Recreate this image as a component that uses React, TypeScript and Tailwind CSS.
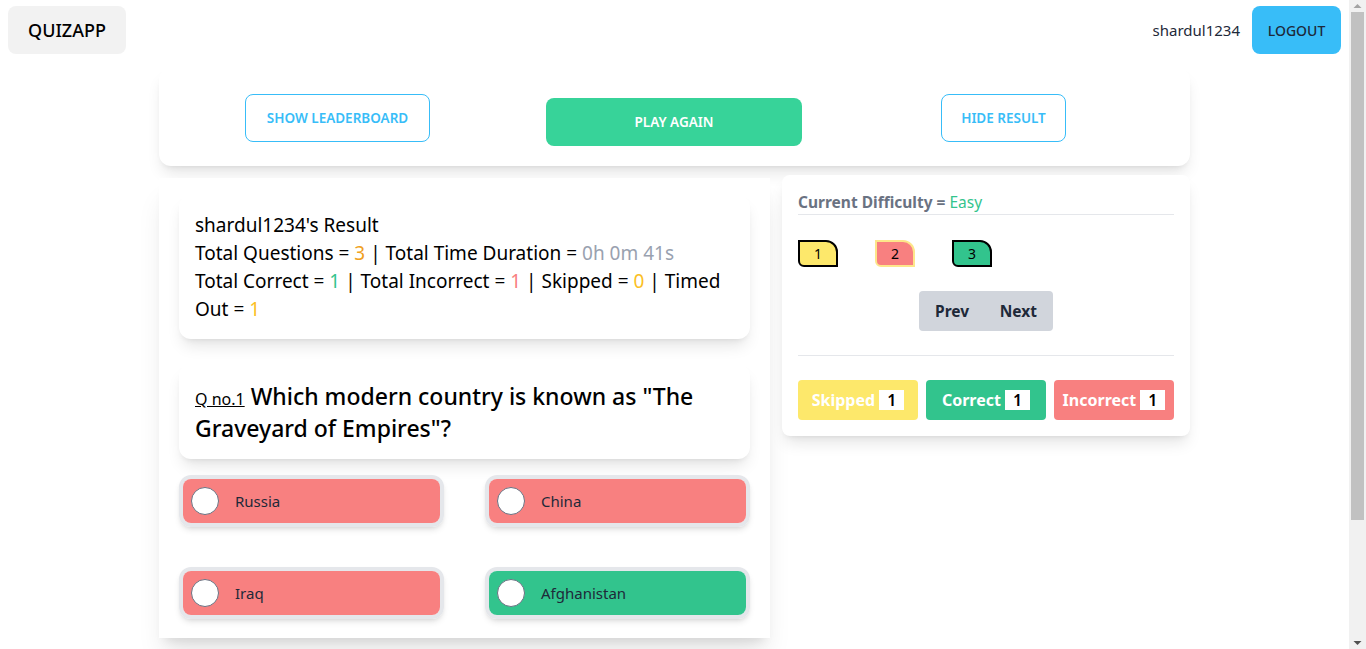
import React from 'react';

const options = [
  { label: 'Russia', correct: false },
  { label: 'China', correct: false },
  { label: 'Iraq', correct: false },
  { label: 'Afghanistan', correct: true },
];

const OptionItem = ({ label, correct }: { label: string; correct: boolean }) => (
  <div className="rounded-xl border-4 border-gray-200 shadow-md">
    <div
      className={`flex h-[44px] items-center rounded-lg pl-2 ${
        correct ? 'bg-[#32c48d]' : 'bg-[#f88080]'
      }`}
    >
      <span className="h-[28px] w-[28px] rounded-full border border-gray-500 bg-white" />
      <span className="ml-4 text-[15px] text-gray-800">{label}</span>
    </div>
  </div>
);

// browser scrollbar as seen in the screenshot
const FakeScrollbar = () => (
  <div className="fixed right-0 top-0 flex h-full w-[17px] flex-col items-center bg-[#f1f1f1]">
    <svg width="17" height="12" viewBox="0 0 17 12" className="shrink-0">
      <path d="M4.5 8 L8.5 4 L12.5 8 Z" fill="#a3a3a3" />
    </svg>
    <div className="h-[508px] w-[13px] bg-[#c1c1c1]" />
    <div className="flex-1" />
    <svg width="17" height="12" viewBox="0 0 17 12" className="shrink-0">
      <path d="M4.5 4 L8.5 8 L12.5 4 Z" fill="#505050" />
    </svg>
  </div>
);

export default function App() {
  return (
    <div className="min-h-[790px] w-[1349px] bg-white pb-[150px] font-['Noto_Sans',sans-serif] text-black">
      {/* Navbar */}
      <div className="flex items-center justify-between px-2 pt-[6px]">
        <button className="h-12 w-[118px] rounded-lg bg-[#f2f2f2] text-[18px] font-medium">QUIZAPP</button>
        <div className="flex items-center gap-3">
          <span className="text-[15px] text-gray-800">shardul1234</span>
          <button className="h-12 w-[89px] rounded-lg bg-[#38bdf8] text-[14px] font-medium text-gray-800">LOGOUT</button>
        </div>
      </div>

      <div className="mx-auto mt-[14px] w-[1031px]">
        {/* Action bar */}
        <div className="flex h-[98px] items-center rounded-xl bg-white pl-[86px] shadow-lg">
          <button className="mt-0.5 h-12 w-[185px] rounded-lg border border-[#38bdf8] text-[13.5px] font-semibold text-[#38bdf8]">
            SHOW LEADERBOARD
          </button>
          <button className="ml-[116px] mt-2.5 h-12 w-[256px] rounded-lg bg-[#37d399] text-[13.5px] font-semibold text-white">
            PLAY AGAIN
          </button>
          <button className="ml-[139px] mt-0.5 h-12 w-[125px] rounded-lg border border-[#38bdf8] text-[13.5px] font-semibold text-[#38bdf8]">
            HIDE RESULT
          </button>
        </div>

        <div className="mt-[9px] flex items-start gap-3">
          {/* Left column */}
          <div className="mt-[3px] w-[611px] bg-white px-5 pb-[19px] pt-[17px] shadow-xl">
            <div className="rounded-xl bg-white p-4 text-[19px] leading-7 shadow-lg">
              <div>shardul1234's Result</div>
              <div>
                Total Questions = <span className="text-[#f0a020]">3</span> | Total Time Duration ={' '}
                <span className="text-gray-400">0h 0m 41s</span>
              </div>
              <div>
                Total Correct = <span className="text-[#34c48d]">1</span> | Total Incorrect ={' '}
                <span className="text-[#f88080]">1</span> | Skipped = <span className="text-[#fbbf24]">0</span> | Timed
                Out = <span className="text-[#fbbf24]">1</span>
              </div>
            </div>

            <div className="mt-[25px] rounded-xl bg-white px-4 pb-[15px] pt-4 text-[23px] font-medium leading-8 shadow-lg">
              <span className="align-baseline text-[16px] font-normal leading-none underline">Q no.1</span> Which modern
              country is known as "The Graveyard of Empires"?
            </div>

            <div className="mt-4 grid grid-cols-2 gap-x-[41px] gap-y-10">
              {options.map((o) => (
                <OptionItem key={o.label} label={o.label} correct={o.correct} />
              ))}
            </div>
          </div>

          {/* Right column */}
          <div className="w-[408px] rounded-lg bg-white p-4 shadow-lg">
            <div className="border-b border-gray-200 pb-px text-[15.5px] font-bold leading-[22px] text-gray-500">
              Current Difficulty = <span className="font-normal text-[#34c48d]">Easy</span>
            </div>

            <div className="mt-[25px] flex gap-[37px]">
              <div className="flex h-[27px] w-10 items-center justify-center rounded-bl-md rounded-tr-xl border-2 border-black bg-[#fde86b] text-[14px]">
                1
              </div>
              <div className="flex h-[27px] w-10 items-center justify-center rounded-bl-md rounded-tr-xl border-2 border-[#fde68a] bg-[#f88080] text-[14px]">
                2
              </div>
              <div className="flex h-[27px] w-10 items-center justify-center rounded-bl-md rounded-tr-xl border-2 border-black bg-[#32c48d] text-[14px]">
                3
              </div>
            </div>

            <div className="mt-6 flex justify-center">
              <div className="flex h-10 w-[134px] items-center justify-between rounded bg-gray-300 px-4 pt-0.5 text-[15.5px] font-bold text-gray-800">
                <span>Prev</span>
                <span>Next</span>
              </div>
            </div>

            <div className="mt-6 border-t border-gray-200" />

            <div className="mt-6 grid grid-cols-3 gap-2">
              <div className="flex h-10 items-center justify-center gap-1 rounded bg-[#fde86b] text-[16px] font-bold text-white">
                Skipped <span className="bg-white px-2 text-[16px] font-semibold leading-5 text-black">1</span>
              </div>
              <div className="flex h-10 items-center justify-center gap-1 rounded bg-[#32c48d] text-[16px] font-bold text-white">
                Correct <span className="bg-white px-2 text-[16px] font-semibold leading-5 text-black">1</span>
              </div>
              <div className="flex h-10 items-center justify-center gap-1 rounded bg-[#f88080] text-[16px] font-bold text-white">
                Incorrect <span className="bg-white px-2 text-[16px] font-semibold leading-5 text-black">1</span>
              </div>
            </div>
          </div>
        </div>
      </div>
      <FakeScrollbar />
    </div>
  );
}
